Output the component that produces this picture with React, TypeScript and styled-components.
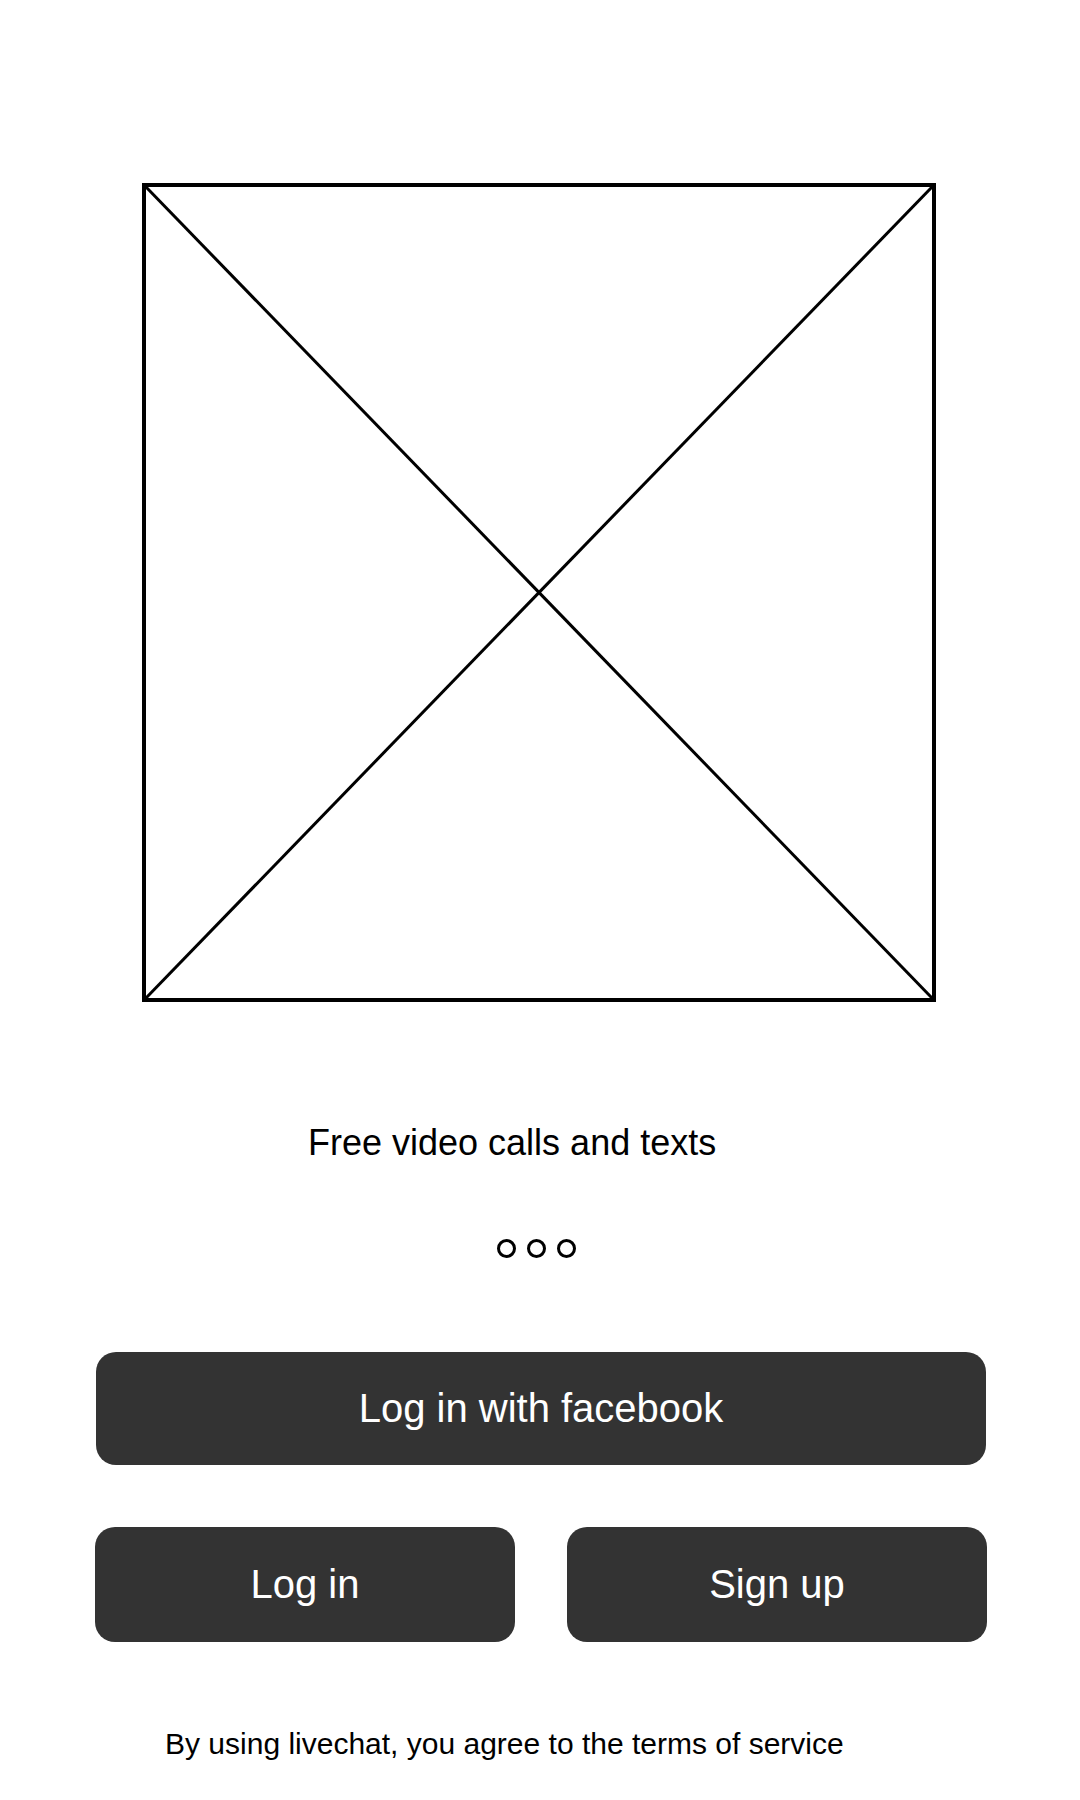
import React from "react";
import styled, { createGlobalStyle } from "styled-components";

const GlobalStyle = createGlobalStyle`
  html, body {
    margin: 0;
    padding: 0;
    background: #ffffff;
  }

  body {
    font-family: "Liberation Sans", Arial, sans-serif;
    color: #000000;
  }
`;

export default function App() {
  return (
    <>
      <GlobalStyle />
      <Screen>
        <Placeholder>
          <svg viewBox="0 0 100 100" preserveAspectRatio="none">
            <line x1="0" y1="0" x2="100" y2="100" />
            <line x1="100" y1="0" x2="0" y2="100" />
          </svg>
        </Placeholder>

        <Tagline>Free video calls and texts</Tagline>

        <Pager>
          <Dot />
          <Dot />
          <Dot />
        </Pager>

        <WideButton>Log in with facebook</WideButton>

        <ButtonRow>
          <HalfButton>Log in</HalfButton>
          <HalfButton>Sign up</HalfButton>
        </ButtonRow>

        <Terms>By using livechat, you agree to the terms of service</Terms>
      </Screen>
    </>
  );
}

const Screen = styled.div`
  width: 1080px;
  min-height: 1800px;
  display: flex;
  flex-direction: column;
  align-items: flex-start;
`;

const Placeholder = styled.div`
  box-sizing: border-box;
  margin: 183px 0 0 142px;
  width: 794px;
  height: 819px;
  border: 4px solid #000;

  & svg {
    display: block;
    width: 100%;
    height: 100%;
    overflow: visible;
  }

  & line {
    stroke: #000;
    stroke-width: 3px;
    vector-effect: non-scaling-stroke;
  }
`;

const Tagline = styled.p`
  margin: 123px 0 0 0;
  padding-left: 308px;
  font-size: 36px;
  line-height: 36px;
`;

const Pager = styled.div`
  display: flex;
  gap: 11px;
  margin-top: 78px;
  padding-left: 497px;
`;

const Dot = styled.span`
  box-sizing: border-box;
  width: 19px;
  height: 19px;
  border: 3px solid #000;
  border-radius: 50%;
`;

const BaseButton = styled.button`
  box-sizing: border-box;
  display: flex;
  align-items: center;
  justify-content: center;
  border: none;
  border-radius: 20px;
  background: #333333;
  color: #ffffff;
  font-family: "Liberation Sans", Arial, sans-serif;
  font-size: 40px;
  padding: 0;
  cursor: pointer;
`;

const WideButton = styled(BaseButton)`
  margin: 94px 0 0 96px;
  width: 890px;
  height: 113px;
`;

const ButtonRow = styled.div`
  display: flex;
  gap: 52px;
  margin-top: 62px;
  padding-left: 95px;
`;

const HalfButton = styled(BaseButton)`
  width: 420px;
  height: 115px;
`;

const Terms = styled.p`
  margin: 87px 0 0 0;
  padding-left: 165px;
  font-size: 30px;
  line-height: 30px;
`;
